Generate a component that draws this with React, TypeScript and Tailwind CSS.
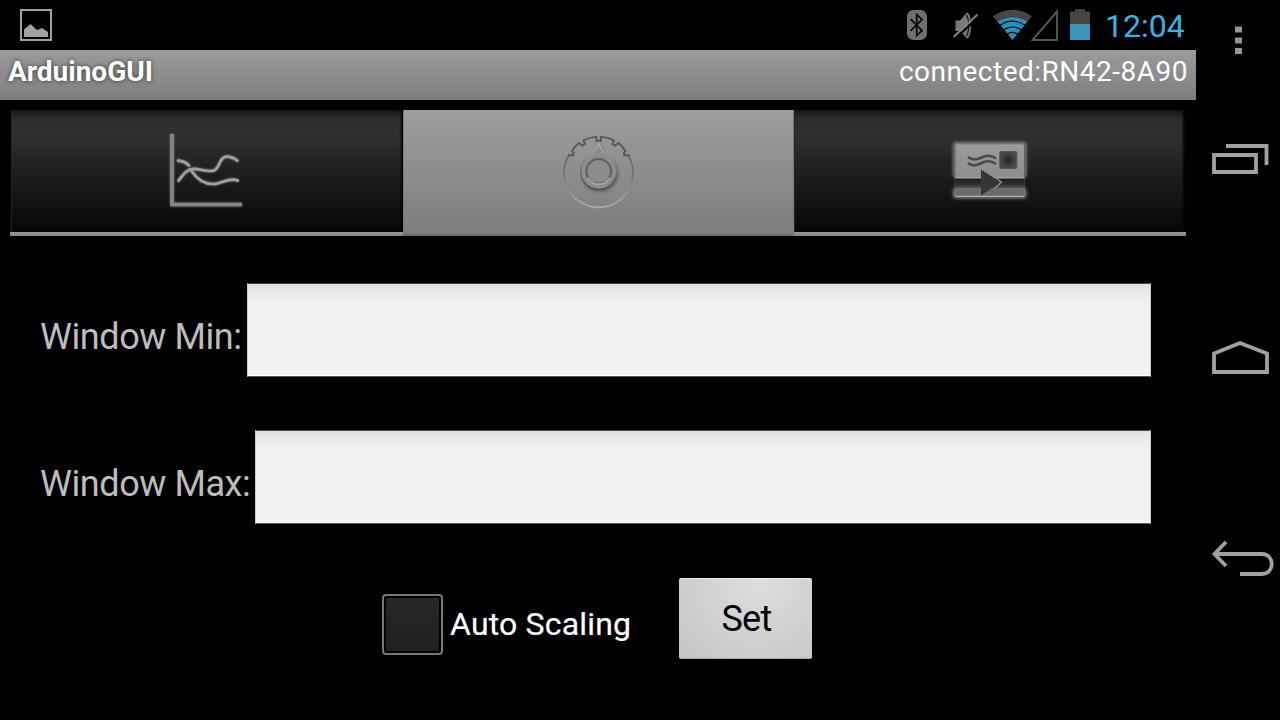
import React from "react";

function PictureIcon() {
  return (
    <svg width="34" height="34" viewBox="19 8 34 34" fill="none">
      <rect x="21" y="10" width="30" height="30" stroke="#a0a0a0" strokeWidth="2" />
      <path d="M24 37V29.500L30.500 24L37 30L42 28L48 32V37Z" fill="#a3a3a3" />
    </svg>
  );
}

function StatusIcons() {
  return (
    <svg width="200" height="50" viewBox="900 0 200 50" fill="none">
      <rect x="907" y="10" width="20" height="30" rx="6.500" fill="#6f6f6f" />
      <path d="M910.500 19L922 30.500L916.700 35.500V14.500L922 19.500L910.500 31" stroke="#000" strokeWidth="1.700" />
      <path d="M955.500 20.500H960L967 12.500C972.500 13 972.500 38 967 38.500L960 31H955.500Z" fill="#7a7a7a" />
      <path d="M966.500 15C969.500 20 969.500 31 966.500 36" stroke="#181818" strokeWidth="1.300" />
      <path d="M955.500 38.500L979.500 16" stroke="#000" strokeWidth="2" />
      <path d="M953.500 37L977.500 14.500" stroke="#808080" strokeWidth="2" />
      <path d="M993 16.500C1005 7.500 1020 7.500 1032 16.500L1027.500 21.500C1018 15 1007 15 997.500 21.500Z" fill="#474747" />
      <path d="M997.500 21.500C1007 15.500 1018 15.500 1027.500 21.500L1012.500 40Z" fill="#2b8fb9" />
      <path d="M1000 25.300C1008 20 1017 20 1025 25.300M1003.500 30C1009 26.200 1016 26.200 1021.500 30M1006.700 34.300C1010.500 31.800 1014.500 31.800 1018.300 34.300" stroke="#000" strokeWidth="1.100" />
      <path d="M1057 11.500V40H1032.500Z" stroke="#555" strokeWidth="2" />
      <path d="M1070 11.500H1075V9H1085V11.500H1090V24H1070Z" fill="#444" />
      <rect x="1070" y="24" width="20" height="16" fill="#3b95ba" />
    </svg>
  );
}

function ChartIcon() {
  return (
    <svg className="drop-shadow-[0_0_1px_#888]" width="84" height="84" viewBox="165 129 84 84" fill="none">
      <path d="M172 134V204.500H242" stroke="#858585" strokeWidth="3.600" />
      <g stroke="#a0a0a0" strokeWidth="2.700" strokeLinecap="round">
        <path d="M178 160.700C182 161 186 162.500 189 165.500" />
        <path d="M178.500 180.700C183 175 187 168.500 194 168.800C201 169 208 172.500 214 170.500C220 168 219 157.500 226 156.700C231 156.500 234 158 237.300 160.700" />
        <path d="M192 171.500C197 179 204 184 213 184C222 184 228 177 237.800 180.500" />
      </g>
    </svg>
  );
}

function DialIcon() {
  const pointer =
    "M590.500 155.500C593.500 153.500 596.500 148.500 598.700 144C601 148.500 604 153.500 607 155.500A18 18 0 1 1 590.500 155.500Z";
  return (
    <svg width="84" height="84" viewBox="556 129 84 84" fill="none">
      <defs>
        <linearGradient id="rim" gradientUnits="userSpaceOnUse" x1="0" y1="136" x2="0" y2="207">
          <stop offset="0" stopColor="#505050" />
          <stop offset=".3" stopColor="#666" />
          <stop offset=".55" stopColor="#747474" />
          <stop offset=".75" stopColor="#919191" />
          <stop offset="1" stopColor="#acacac" />
        </linearGradient>
        <linearGradient id="knob" x1="0" y1="0" x2="0" y2="1">
          <stop offset="0" stopColor="#acacac" />
          <stop offset=".4" stopColor="#858585" />
          <stop offset="1" stopColor="#505050" />
        </linearGradient>
      </defs>
      <path d="M569 155A34.500 34.500 0 1 0 628 155" stroke="url(#rim)" strokeWidth="1.600" />
      <path
        d="M568 155.200H573.500V153L572 151C574 147.500 576.500 145 579 143L582.500 145.500L585 143.700L583.300 140.500C587.500 138.200 591.500 137.200 596.300 136.900V140.800H601V136.900C606 137.200 610 138.200 614 140.500L612.500 144L615 145.500L618.500 143C621 145 623.500 147.500 625.500 151L624 153V155.200H629.500"
        stroke="#575757"
        strokeWidth="1.900"
      />
      <g className="drop-shadow-[1px_2px_1px_#5559]">
        <path d={pointer} stroke="url(#knob)" strokeWidth="1.700" fill="#8c8c8c" />
      </g>
      <circle cx="598.700" cy="171.300" r="12.300" stroke="#5f5f5f" strokeWidth="2" />
      <path d="M588 178A12.300 12.300 0 0 0 609.500 178" stroke="#a3a3a3" strokeWidth="2" />
    </svg>
  );
}

function CardIcon() {
  return (
    <svg width="84" height="84" viewBox="948.5 129 84 84" fill="none">
      <defs>
        <linearGradient id="card" x1="0" y1="0" x2="0" y2="1">
          <stop offset="0" stopColor="#9b9b9b" />
          <stop offset="1" stopColor="#858585" />
        </linearGradient>
        <linearGradient id="gap" x1="0" y1="0" x2="0" y2="1">
          <stop offset="0" stopColor="#1c1c1c" />
          <stop offset=".6" stopColor="#303030" />
          <stop offset="1" stopColor="#555" />
        </linearGradient>
        <radialGradient id="stamp">
          <stop offset="0" stopColor="#262626" />
          <stop offset="1" stopColor="#4b4b4b" />
        </radialGradient>
        <filter id="glow" x="-20%" y="-20%" width="140%" height="140%">
          <feGaussianBlur stdDeviation="1.600" />
        </filter>
      </defs>
      <g filter="url(#glow)" fill="#808080">
        <rect x="953.500" y="142" width="73.500" height="36" rx="3" />
        <rect x="953.500" y="188" width="73.500" height="10.500" rx="3" />
      </g>
      <rect x="955.300" y="144.500" width="69.700" height="52.500" rx="1" fill="url(#card)" />
      <rect x="955.300" y="178.300" width="69.700" height="10" fill="url(#gap)" />
      <rect x="955.300" y="188" width="69.700" height="7.500" fill="#6c6c6c" />
      <path d="M957 196.500H1024M956 177.800H1025" stroke="#b0b0b0" />
      <path d="M955.500 145V178M1025 145V178" stroke="#606060" />
      <rect x="1000.300" y="151.500" width="17" height="17" rx="1" fill="url(#stamp)" stroke="#555" />
      <path d="M968.500 157C972 160 976 160 981 158C988 154.500 992 155 996.500 158.500M968.500 163C972 166 976 166 981 163.500C988 160 992 160.500 996.500 164" stroke="#4a4a4a" strokeWidth="2.600" />
      <path d="M981.500 169.500L1001 182.300L981.500 195.500Z" fill="#353535" />
      <path d="M995.500 177L1001.800 182.300L995 188.500" stroke="#8a8a8a" strokeWidth="1.500" />
    </svg>
  );
}

function Tab({ active = false, label, children }: { active?: boolean; label: string; children: React.ReactNode }) {
  return (
    <button
      role="tab"
      aria-label={label}
      aria-selected={active}
      className={
        active
          ? "flex h-[126px] w-[391px] items-start justify-center border-x border-b-2 border-x-[#777] border-b-[#6c6c6c] bg-linear-to-b from-[#9e9e9e] to-[#7d7d7d] pt-[19px]"
          : "flex h-[122px] flex-1 items-start justify-center border-l border-l-[#252525] bg-[linear-gradient(#181818,#2d2d2d_8%,#303030_20%,#1c1c1c_55%,#070707)] pt-[19px] shadow-[inset_-2px_0_2px_#050505]"
      }
    >
      {children}
    </button>
  );
}

function Field({ label, labelWidth }: { label: string; labelWidth: string }) {
  return (
    <label className="flex h-[94px] items-center text-[36px] leading-[42px] text-[#bdbdbd]">
      <span className={`${labelWidth} shrink-0 pt-[14px] tracking-[-0.43px] whitespace-nowrap`}>{label}</span>
      <input className="h-[94px] min-w-0 flex-1 border border-t-[#4a474c] border-r-[#ccc] border-b-[#555] border-l-[#ccc] bg-[linear-gradient(#e0e0e0,#ebebeb_10%,#f1f1f1_22%,#f1f1f1)] px-3 text-black shadow-[inset_0_-1px_0_#fff] outline-none" />
    </label>
  );
}

function NavBar() {
  return (
    <nav className="w-[84px] shrink-0">
      <svg width="84" height="720" viewBox="1196 0 84 720" fill="none" stroke="#a0a0a0" strokeWidth="3.800">
        <path d="M1235 26.500h7v6h-7zM1235 37.500h7v6h-7zM1235 48h7v6h-7z" fill="#959595" stroke="none" />
        <path d="M1214 155H1256V172H1214ZM1226 146H1266.500V165" />
        <path d="M1214 353.500L1240 343L1267 353.500V372H1214Z" />
        <path d="M1216 554H1262C1275 554 1275 574 1262 574H1240" />
        <path d="M1226 542L1214.500 554L1226 566" />
      </svg>
    </nav>
  );
}

export default function App() {
  return (
    <div className="flex h-[720px] w-[1280px] overflow-hidden bg-black font-['Roboto',sans-serif]">
      <div className="flex w-[1196px] flex-col">
        <div className="flex h-[50px] items-center justify-between pr-[11px] pl-[19px]">
          <PictureIcon />
          <div className="flex items-center">
            <StatusIcons />
            <span className="w-[85px] pt-[2px] pl-[5px] text-[32px] leading-[38px] whitespace-nowrap text-[#33b5e5]">12:04</span>
          </div>
        </div>
        <header className="flex h-[50px] justify-between bg-linear-to-b from-[#9b9b9b] to-[#7e7e7e] px-2 pt-[5px] text-[28px] leading-[33px] text-white">
          <h1 className="font-bold [text-shadow:0_0_4px_#333]">ArduinoGUI</h1>
          <span className="tracking-[0.5px]">connected:RN42-8A90</span>
        </header>
        <div role="tablist" className="mx-[10px] mt-[10px] flex h-[126px] items-start bg-[linear-gradient(#000_122px,#999_122px,#858585_126px)] px-px">
          <Tab label="Graph"><ChartIcon /></Tab>
          <Tab label="Settings" active><DialIcon /></Tab>
          <Tab label="Send"><CardIcon /></Tab>
        </div>
        <main className="flex flex-col pt-[47px] pr-[45px] pl-10">
          <Field label="Window Min:" labelWidth="w-[207px]" />
          <div className="mt-[53px]">
            <Field label="Window Max:" labelWidth="w-[215px]" />
          </div>
          <div className="mt-[54px] flex pl-[342px]">
            <label className="mt-[15px] flex h-[62px] items-center text-[32px] leading-[38px] whitespace-nowrap text-white">
              <span className="mr-[7px] flex size-[61px] items-center justify-center rounded-[4px] border-2 border-[#777] p-[2px]">
                <span className="size-full bg-linear-to-b from-[#282828] to-[#202020]" />
              </span>
              <span className="w-[229px] tracking-[0.18px] [-webkit-text-stroke:0.2px_#fff]">Auto Scaling</span>
            </label>
            <button className="h-[81px] w-[133px] rounded-[2px] border-t border-b border-t-[#eee] border-b-[#aaa] bg-[radial-gradient(ellipse_at_60%_0%,#dedede,#cecece_65%,#c4c4c4)] pt-px pl-[2px] text-[36px] tracking-[-0.7px] text-black">Set</button>
          </div>
        </main>
      </div>
      <NavBar />
    </div>
  );
}
